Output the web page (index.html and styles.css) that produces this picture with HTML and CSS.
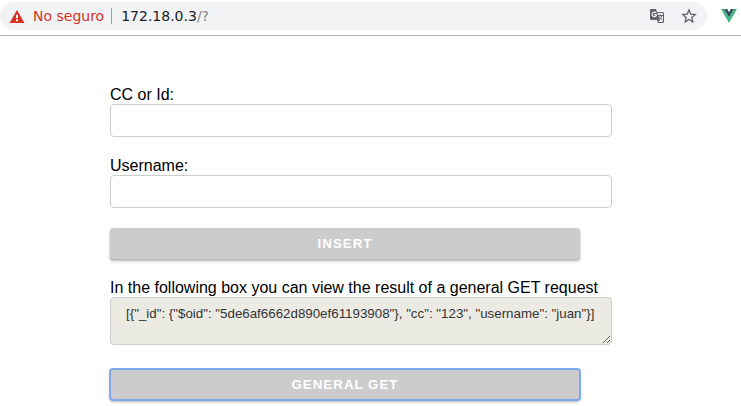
FILE: index.html
```html
<!DOCTYPE html>
<html lang="en">
<head>
<meta charset="utf-8">
<meta name="viewport" content="width=device-width, initial-scale=1">
<title>General GET</title>
<link rel="stylesheet" href="styles.css">
</head>
<body>
<header class="toolbar">
  <div class="address">
    <svg class="warning" viewBox="0 0 16 14" aria-hidden="true"><path fill="#d93025" d="M8 0 16 14H0Z"/><path fill="#fff" d="M7 5h2v4H7zM7 10h2v2H7z"/></svg>
    <span class="insecure">No seguro</span>
    <span class="divider"></span>
    <span class="url">172.18.0.3<span class="path">/?</span></span>
    <button class="icon-button" type="button" aria-label="Translate">
      <svg width="16" height="16" viewBox="0 0 16 16"><path fill="#5f6368" d="M2 1h5l1 3h5.500q1.500 0 1.500 1.500v8q0 1.500-1.500 1.500H9l-1-3H2Q1 12 1 11V2Q1 1 2 1Z"/><path fill="#f1f3f4" d="M8.500 5H13q1 0 1 1v7q0 1-1 1H9.500l1.500-2Z"/><path fill="none" stroke="#f1f3f4" stroke-width="1.200" d="M7.200 5A2.300 2.300 0 1 0 7.300 7.500V6.700H5.200"/><path fill="none" stroke="#5f6368" d="M9 7.500h5M11.500 6.500v1M13 7.500q-.5 2-2.500 3.500M10.500 8.500q1 2 3 3.500"/></svg>
    </button>
    <button class="icon-button" type="button" aria-label="Bookmark">
      <svg width="16" height="16" viewBox="0 0 16 16"><path fill="none" stroke="#5f6368" stroke-width="1.300" d="m8 2 1.700 4.100 4.500.4-3.400 2.900 1 4.400L8 11.500l-3.800 2.300 1-4.400-3.400-2.900 4.500-.4Z"/></svg>
    </button>
  </div>
  <button class="icon-button" type="button" aria-label="Vue devtools">
    <svg width="16" height="14" viewBox="0 0 16 14"><path fill="#41b883" d="M0 0h3.200L8 8.300 12.800 0H16L8 14Z"/><path fill="#35495e" d="M3.200 0h3L8 3.200 9.800 0h3L8 8.300Z"/></svg>
  </button>
</header>
<main class="page">
  <form class="form">
    <div class="field">
      <label for="cc">CC or Id:</label>
      <input class="control" id="cc" type="text">
    </div>
    <div class="field">
      <label for="username">Username:</label>
      <input class="control" id="username" type="text">
    </div>
    <button class="action" type="button">INSERT</button>
    <div class="field result">
      <label for="result">In the following box you can view the result of a general GET request</label>
      <textarea class="control" id="result" readonly>[{"_id": {"$oid": "5de6af6662d890ef61193908"}, "cc": "123", "username": "juan"}]</textarea>
    </div>
    <button class="action active" type="button">GENERAL GET</button>
  </form>
</main>
</body>
</html>
```
FILE: styles.css
```css
* {
  box-sizing: border-box;
}

body {
  margin: 0;
  background: #fff;
  color: #000;
  font: 16px/18px "Liberation Sans", Arial, sans-serif;
}

.toolbar {
  display: flex;
  align-items: center;
  gap: 14px;
  height: 36px;
  padding: 2px 4px 5px 0;
  border-bottom: 1px solid #b3b3b3;
}

.address {
  display: flex;
  flex: 1;
  align-items: center;
  height: 28px;
  padding: 0 10px 0 9px;
  border-radius: 14px;
  background: #f1f3f4;
  font: 14px/18px "DejaVu Sans", sans-serif;
}

.warning {
  width: 16px;
  height: 13px;
  margin-right: 8px;
}

.insecure {
  color: #d93025;
}

.divider {
  width: 1px;
  height: 16px;
  margin: 0 9px 0 7px;
  background: #9aa0a6;
}

.url {
  flex: 1;
  color: #202124;
}

.path {
  color: #80868b;
}

.icon-button {
  display: flex;
  padding: 0;
  border: 0;
  background: none;
}

.icon-button + .icon-button {
  margin-left: 16px;
}

.page {
  padding: 50px 129px 5px 110px;
}

.form {
  display: flex;
  flex-direction: column;
}

.field {
  display: flex;
  flex-direction: column;
  margin-bottom: 20px;
}

.control {
  width: 100%;
  height: 33px;
  padding: 0 15px;
  border: 1px solid #ccc;
  border-radius: 4px;
  background: #fff;
  color: #333;
  font-family: "Liberation Sans", Arial, sans-serif;
}

.result {
  margin-bottom: 24px;
}

.result .control {
  height: 48px;
  padding: 8px 15px;
  background: #ebebe4;
}

.action {
  height: 31px;
  margin: 0 32px 20px 0;
  padding: 0;
  border: 0;
  border-radius: 3px;
  background: #ccc;
  box-shadow: 0 1px 0 #b8b8b8, 0 2px 3px rgba(0, 0, 0, 0.3);
  color: #fff;
  font-family: "Liberation Sans", Arial, sans-serif;
  font-weight: bold;
  letter-spacing: 1px;
}

.active {
  margin-bottom: 0;
  outline: 2px solid #80a9ee;
  outline-offset: -1px;
}
```
